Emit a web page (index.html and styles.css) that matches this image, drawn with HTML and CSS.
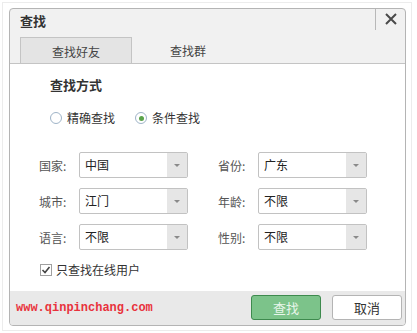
FILE: index.html
```html
<!DOCTYPE html>
<html lang="zh">
<head>
<meta charset="utf-8">
<link rel="stylesheet" href="styles.css">
</head>
<body>
<div class="frame">
  <div class="dialog">
    <div class="titlebar">
      <span class="title">查找</span>
      <button class="close" aria-label="关闭">
        <svg width="12" height="12" viewBox="0 0 12 12"><path d="M1 1 L11 11 M11 1 L1 11" stroke="#4a4a4a" stroke-width="2" fill="none"/></svg>
      </button>
    </div>
    <div class="tabs">
      <div class="tab active">查找好友</div>
      <div class="tab">查找群</div>
    </div>
    <div class="content">
      <div class="heading">查找方式</div>
      <div class="radios">
        <label class="radio"><span class="dot"></span>精确查找</label>
        <label class="radio checked"><span class="dot"></span>条件查找</label>
      </div>
      <div class="grid">
        <div class="field"><span class="lbl">国家:</span><div class="select"><span class="val">中国</span><span class="arrow"></span></div></div>
        <div class="field"><span class="lbl">省份:</span><div class="select"><span class="val">广东</span><span class="arrow"></span></div></div>
        <div class="field"><span class="lbl">城市:</span><div class="select"><span class="val">江门</span><span class="arrow"></span></div></div>
        <div class="field"><span class="lbl">年龄:</span><div class="select"><span class="val">不限</span><span class="arrow"></span></div></div>
        <div class="field"><span class="lbl">语言:</span><div class="select"><span class="val">不限</span><span class="arrow"></span></div></div>
        <div class="field"><span class="lbl">性别:</span><div class="select"><span class="val">不限</span><span class="arrow"></span></div></div>
      </div>
      <label class="check">
        <span class="box"><svg width="10" height="10" viewBox="0 0 10 10"><path d="M1.5 5 L4 7.5 L8.5 2" stroke="#444" stroke-width="1.6" fill="none"/></svg></span>只查找在线用户
      </label>
    </div>
    <div class="footer">
      <span class="url">www.qinpinchang.com</span>
      <div class="buttons">
        <button class="btn primary">查找</button>
        <button class="btn">取消</button>
      </div>
    </div>
  </div>
</div>
</body>
</html>
```
FILE: styles.css
```css
* { box-sizing: border-box; }
html, body { margin: 0; padding: 0; background: #fff; }
body {
  font-family: "Noto Sans CJK SC", "Liberation Sans", sans-serif;
  font-size: 12px;
  color: #333;
  width: 417px;
  height: 333px;
  overflow: hidden;
}
.frame {
  margin: 2px 0 0 2px;
  width: 410px;
  height: 329px;
  border: 1px solid #ececec;
  padding: 5px 0 0 6px;
}
.dialog {
  width: 397px;
  height: 318px;
  border: 1px solid #b4b4b4;
  border-radius: 4px;
  background: #f1f1f1;
  display: flex;
  flex-direction: column;
  overflow: hidden;
}
.titlebar {
  height: 28px;
  display: flex;
  align-items: flex-start;
  justify-content: space-between;
}
.title {
  font-weight: bold;
  font-size: 13px;
  padding: 2px 0 0 10px;
  line-height: 20px;
  color: #333;
}
.close {
  width: 30px;
  height: 22px;
  border: none;
  border-left: 1px solid #b8b8b8;
  background: transparent;
  padding: 0;
  display: flex;
  align-items: center;
  justify-content: center;
  margin-top: -1px;
}
.tabs {
  height: 27px;
  display: flex;
  padding-left: 10px;
  border-bottom: 1px solid #c4c4c4;
}
.tab {
  width: 112px;
  display: flex;
  align-items: center;
  justify-content: center;
  color: #444;
  font-size: 12px;
  padding-top: 1px;
}
.tab.active {
  background: #e4e4e4;
  border: 1px solid #c4c4c4;
  border-bottom: none;
}
.content {
  flex: 1;
  background: #fff;
  padding: 12px 0 0 0;
}
.heading {
  font-weight: bold;
  font-size: 13px;
  color: #333;
  padding-left: 40px;
  line-height: 18px;
}
.radios {
  display: flex;
  gap: 20px;
  padding: 15px 0 0 40px;
  line-height: 18px;
}
.radio {
  display: flex;
  align-items: center;
  gap: 5px;
  color: #333;
}
.dot {
  width: 12px;
  height: 12px;
  border: 1px solid #9fb4c8;
  border-radius: 50%;
  background: #fff;
  display: flex;
  align-items: center;
  justify-content: center;
}
.radio.checked .dot::after {
  content: "";
  width: 5px;
  height: 5px;
  border-radius: 50%;
  background: #5aa34a;
}
.grid {
  display: grid;
  grid-template-columns: 179px 178px;
  row-gap: 10px;
  padding: 25px 0 0 29px;
}
.field {
  display: flex;
  align-items: center;
  height: 26px;
}
.lbl {
  width: 40px;
  color: #555;
}
.select {
  width: 109px;
  height: 26px;
  border: 1px solid #c2c2c2;
  border-radius: 2px;
  background: #fff;
  display: flex;
  justify-content: space-between;
}
.val {
  padding-left: 5px;
  line-height: 24px;
  color: #222;
}
.arrow {
  width: 20px;
  background: #e6e6e6;
  position: relative;
}
.arrow::after {
  content: "";
  position: absolute;
  left: 7px;
  top: 11px;
  border-left: 3px solid transparent;
  border-right: 3px solid transparent;
  border-top: 3px solid #8a8a8a;
}
.check {
  display: flex;
  align-items: center;
  gap: 4px;
  padding: 11px 0 0 30px;
  color: #333;
  line-height: 18px;
}
.box {
  width: 12px;
  height: 12px;
  border: 1px solid #a0a0a0;
  background: #fff;
  display: flex;
  align-items: center;
  justify-content: center;
}
.footer {
  height: 34px;
  background: #e9e9e9;
  display: flex;
  align-items: center;
  justify-content: space-between;
  padding: 0 3px 1px 6px;
}
.url {
  font-family: "Liberation Mono", monospace;
  font-size: 12px;
  font-weight: bold;
  color: #e8323c;
}
.buttons {
  display: flex;
  gap: 11px;
}
.btn {
  width: 70px;
  height: 25px;
  border: 1px solid #b4b4b4;
  border-radius: 3px;
  background: #fff;
  font-family: "Noto Sans CJK SC", sans-serif;
  font-size: 13px;
  color: #333;
  padding: 0;
}
.btn.primary {
  background: #7cc38a;
  border-color: #3e8a4e;
  color: #e8f6ea;
}
```
